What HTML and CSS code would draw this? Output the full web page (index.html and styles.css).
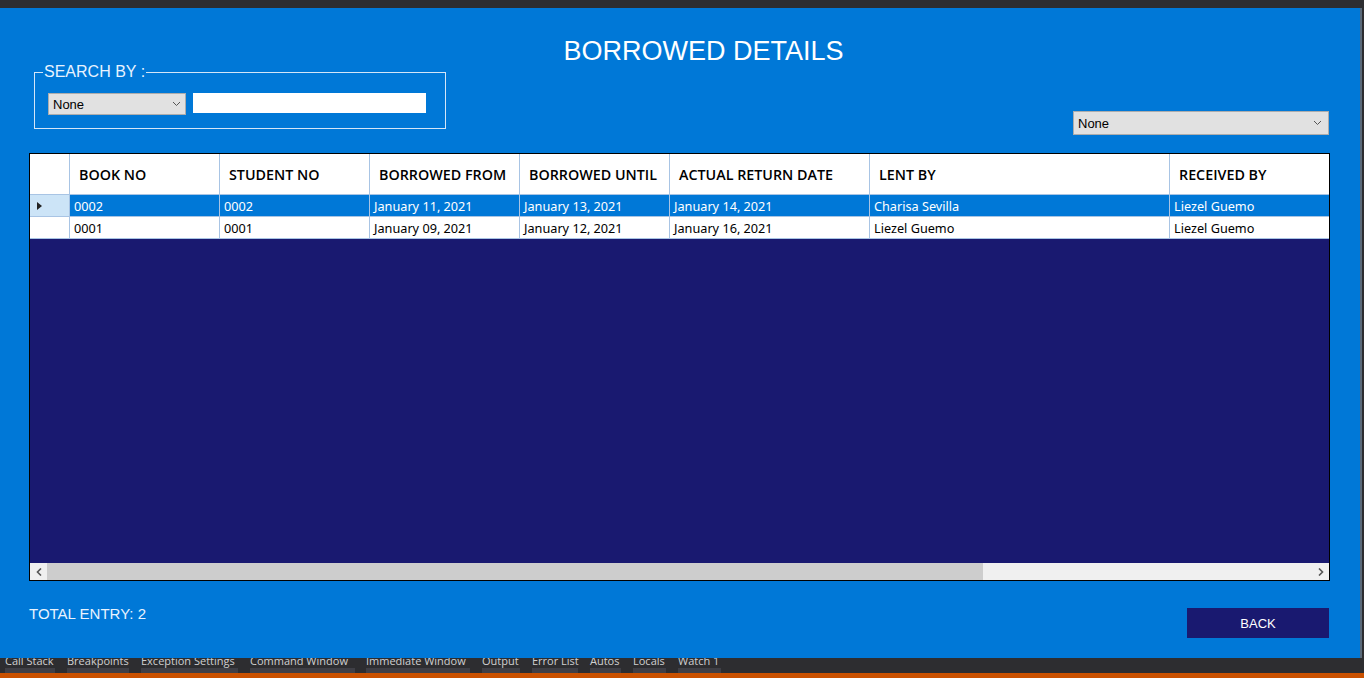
FILE: index.html
```html
<!DOCTYPE html>
<html>
<head>
<meta charset="utf-8">
<link rel="stylesheet" href="styles.css">
</head>
<body>
<div class="topstrip"></div>
<div class="window">
  <h1 class="title">BORROWED DETAILS</h1>
  <div class="toolbar">
    <fieldset class="searchbox">
      <legend>SEARCH BY :</legend>
      <div class="combo small"><span>None</span><svg width="9" height="6" viewBox="0 0 9 6"><path d="M1 1 L4.5 4.5 L8 1" fill="none" stroke="#555" stroke-width="1"/></svg></div>
      <div class="textbox"></div>
    </fieldset>
    <div class="combo wide"><span>None</span><svg width="9" height="6" viewBox="0 0 9 6"><path d="M1 1 L4.5 4.5 L8 1" fill="none" stroke="#555" stroke-width="1"/></svg></div>
  </div>
  <div class="grid">
    <div class="row head">
      <div class="rh"></div>
      <div class="c c1">BOOK NO</div>
      <div class="c c2">STUDENT NO</div>
      <div class="c c3">BORROWED FROM</div>
      <div class="c c4">BORROWED UNTIL</div>
      <div class="c c5">ACTUAL RETURN DATE</div>
      <div class="c c6">LENT BY</div>
      <div class="c c7">RECEIVED BY</div>
    </div>
    <div class="row data sel">
      <div class="rh"><svg width="5" height="8" viewBox="0 0 5 8"><path d="M0 0 L5 4 L0 8 Z" fill="#222"/></svg></div>
      <div class="c c1">0002</div>
      <div class="c c2">0002</div>
      <div class="c c3">January 11, 2021</div>
      <div class="c c4">January 13, 2021</div>
      <div class="c c5">January 14, 2021</div>
      <div class="c c6">Charisa Sevilla</div>
      <div class="c c7">Liezel Guemo</div>
    </div>
    <div class="row data">
      <div class="rh"></div>
      <div class="c c1">0001</div>
      <div class="c c2">0001</div>
      <div class="c c3">January 09, 2021</div>
      <div class="c c4">January 12, 2021</div>
      <div class="c c5">January 16, 2021</div>
      <div class="c c6">Liezel Guemo</div>
      <div class="c c7">Liezel Guemo</div>
    </div>
    <div class="gridbody"></div>
    <div class="hscroll">
      <div class="arrow"><svg width="6" height="8" viewBox="0 0 6 8"><path d="M5 0.5 L1.5 4 L5 7.5" fill="none" stroke="#555" stroke-width="1.6"/></svg></div>
      <div class="track"><div class="thumb"></div></div>
      <div class="arrow"><svg width="6" height="8" viewBox="0 0 6 8"><path d="M1 0.5 L4.5 4 L1 7.5" fill="none" stroke="#555" stroke-width="1.6"/></svg></div>
    </div>
  </div>
  <div class="footer">
    <div class="total">TOTAL ENTRY: 2</div>
    <button class="back">BACK</button>
  </div>
</div>
<div class="tabs">
  <span class="tab t1">Call Stack</span>
  <span class="tab t2">Breakpoints</span>
  <span class="tab t3">Exception Settings</span>
  <span class="tab t4">Command Window</span>
  <span class="tab t5">Immediate Window</span>
  <span class="tab t6">Output</span>
  <span class="tab t7">Error List</span>
  <span class="tab t8">Autos</span>
  <span class="tab t9">Locals</span>
  <span class="tab t10">Watch 1</span>
</div>
<div class="orange"></div>
</body>
</html>
```

FILE: styles.css
```css
html, body {
  margin: 0;
  padding: 0;
  background: #2d2d30;
  width: 1364px;
  height: 678px;
  overflow: hidden;
  font-family: "Liberation Sans", Arial, sans-serif;
}
.topstrip {
  height: 8px;
  background: #2d2d30;
}
.window {
  width: 1362px;
  height: 650px;
  box-sizing: border-box;
  background: #0078d7;
  border-right: 2px solid #5a6a7a;
  padding: 0 0 0 29px;
  display: flex;
  flex-direction: column;
}
.title {
  margin: 28px 0 0 0;
  padding-left: 18px;
  height: 30px;
  font-weight: normal;
  font-size: 27px;
  line-height: 30px;
  color: #ffffff;
  text-align: center;
}
.toolbar {
  display: flex;
  justify-content: space-between;
  align-items: flex-start;
  margin-top: -4px;
  padding-right: 31px;
  height: 91px;
}
.searchbox {
  margin: 0 0 0 5px;
  padding: 11px 0 0 13px;
  width: 412px;
  height: 67px;
  box-sizing: border-box;
  border: 1px solid #d4e6f8;
  display: flex;
  align-items: flex-start;
  gap: 7px;
}
.searchbox legend {
  color: #e8f3ff;
  font-size: 16px;
  padding: 0 1px;
  margin-left: -5px;
  line-height: 20px;
}
.combo {
  background: #e1e1e1;
  border: 1px solid #adadad;
  box-sizing: border-box;
  display: flex;
  align-items: center;
  justify-content: space-between;
  padding: 0 4px 0 4px;
  font-size: 13px;
  color: #000;
}
.combo.small {
  width: 138px;
  height: 22px;
}
.combo.wide {
  width: 256px;
  height: 24px;
  margin-top: 49px;
  padding-right: 6px;
}
.textbox {
  width: 233px;
  height: 20px;
  background: #ffffff;
}
.grid {
  width: 1301px;
  height: 428px;
  box-sizing: border-box;
  border: 1px solid #000;
  background: #191970;
  display: flex;
  flex-direction: column;
}
.row {
  display: flex;
  background: #ffffff;
  box-sizing: border-box;
}
.row.head {
  height: 41px;
  border-bottom: 1px solid #a8c4e4;
  font-family: "Open Sans", "Noto Sans", sans-serif;
  font-weight: 600;
  font-size: 14.3px;
  color: #000;
}
.row.data {
  height: 22px;
  border-bottom: 1px solid #a8c4e4;
  font-family: "Noto Sans", "Open Sans", sans-serif;
  font-size: 12.7px;
  color: #000;
}
.row.sel {
  background: #0078d7;
  color: #ffffff;
}
.rh {
  width: 40px;
  flex: none;
  border-right: 1px solid #a8c4e4;
  box-sizing: border-box;
  display: flex;
  align-items: center;
  padding-left: 7px;
  background: #ffffff;
}
.row.sel .rh {
  background: #cce4f7;
}
.c {
  box-sizing: border-box;
  border-right: 1px solid #a8c4e4;
  display: flex;
  align-items: center;
  white-space: nowrap;
  overflow: hidden;
  flex: none;
}
.row.head .c {
  padding-left: 9px;
}
.row.data .c {
  padding-left: 4px;
}
.c1, .c2, .c3, .c4 { width: 150px; }
.c5 { width: 200px; }
.c6 { width: 300px; }
.c7 { width: 159px; border-right: none; }
.gridbody {
  flex: 1;
}
.hscroll {
  height: 17px;
  display: flex;
  background: #f0f0f0;
}
.arrow {
  width: 17px;
  flex: none;
  display: flex;
  align-items: center;
  justify-content: center;
}
.track {
  flex: 1;
  display: flex;
}
.thumb {
  width: 936px;
  background: #cdcdcd;
}
.footer {
  display: flex;
  justify-content: space-between;
  align-items: flex-start;
  padding-right: 31px;
  margin-top: 24px;
}
.total {
  color: #e8f3ff;
  font-size: 15px;
  line-height: 17px;
}
.back {
  margin-top: 3px;
  width: 142px;
  height: 30px;
  background: #191970;
  border: none;
  color: #ffffff;
  font-family: "Liberation Sans", Arial, sans-serif;
  font-size: 13px;
  padding: 0;
}
.tabs {
  height: 15px;
  position: relative;
  overflow: hidden;
  background: #2d2d30;
}
.tab {
  position: absolute;
  top: 0;
  height: 15px;
  box-sizing: border-box;
  border-bottom: 5px solid #3f3f46;
  font-family: "Open Sans", sans-serif;
  font-size: 11px;
  line-height: 6px;
  color: #d0d0d0;
  padding-left: 0;
  white-space: nowrap;
}
.t1 { left: 5px; width: 50px; }
.t2 { left: 67px; width: 62px; }
.t3 { left: 141px; width: 97px; }
.t4 { left: 250px; width: 105px; }
.t5 { left: 366px; width: 104px; }
.t6 { left: 482px; width: 38px; }
.t7 { left: 532px; width: 46px; }
.t8 { left: 590px; width: 31px; }
.t9 { left: 633px; width: 33px; }
.t10 { left: 678px; width: 43px; }
.orange {
  height: 5px;
  background: #ca5100;
}
```
